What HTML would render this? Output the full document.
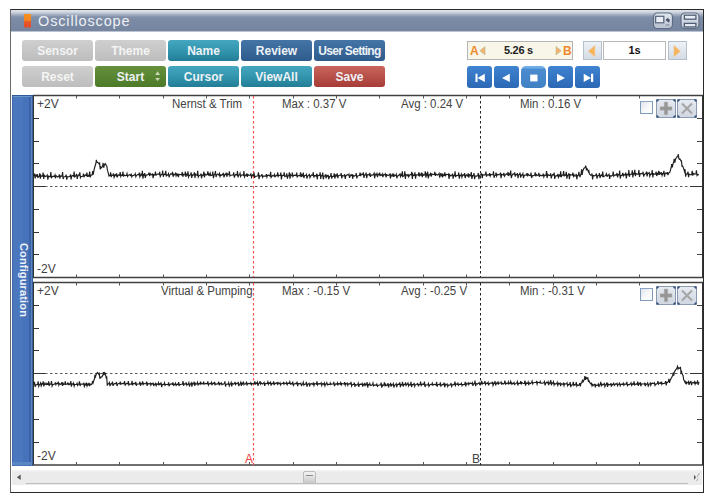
<!DOCTYPE html>
<html><head><meta charset="utf-8">
<style>
*{box-sizing:border-box;margin:0;padding:0}
html,body{width:713px;height:502px;overflow:hidden;background:#fff;font-family:"Liberation Sans",sans-serif}
.a{position:absolute}
#win{left:10px;top:9px;width:694px;height:484px;border:1px solid #2a2a2a;border-left-color:#6a6a6a;background:#fff}
#title{left:11px;top:10px;width:692px;height:22px;background:linear-gradient(#dfe4eb 0,#d2d8e2 2px,#a7b1c3 4.5px,#8090a9 7px,#7a89a4 50%,#7686a1 20px,#7686a1 21px,#bcc4d1 21px)}
#title .t{left:28px;top:3px;font-size:14px;letter-spacing:0.75px;color:#eef0f4}
#ticon{left:24px;top:14px;width:7px;height:14px;background:linear-gradient(#f6841f 0,#f28024 45%,#e5532b 55%,#e04e2b 100%)}
.ib{top:13px;width:20px;height:16px;border-radius:4px;border:1px solid #8e9bb1;background:linear-gradient(#dfe5ee,#b9c3d3)}
.btn{height:21px;width:71px;border-radius:3px;color:#eef2f6;font-weight:bold;font-size:12px;text-align:center;line-height:23px}
.gray{background:linear-gradient(#cfcfcf,#bdbdbd);color:#f4f4f4}
.teal{background:linear-gradient(#44a7bf,#3396ae 50%,#227d96)}
.blue{background:linear-gradient(#4475a6,#2e5b8c)}
.green{background:linear-gradient(#66913c,#4c7a28)}
.red{background:linear-gradient(#c9655d,#a73c36)}
#abox{left:467px;top:41px;width:106px;height:19px;border:1px solid #b4b4b4;background:#f8f5e9}
.sb{top:41px;width:19px;height:19px;border:1px solid #b6c0cc;background:linear-gradient(#eef2f6,#d3dbe5)}
#inp{left:603px;top:41px;width:63px;height:19px;border:1px solid #b8b8b8;background:#fff;font-weight:bold;font-size:11px;text-align:center;line-height:17px;color:#111}
.mb{top:65.5px;width:25px;height:22px;border-radius:3px;background:linear-gradient(#3f83d0,#2b68b6)}
.mb svg{position:absolute;left:0;top:0}
.stop{border-radius:5px;background:linear-gradient(#6eaee8 0,#6eaee8 2px,#4a8ccf 3px,#4081c4 100%)}
#side{left:12px;top:95px;width:21px;height:371px;background:linear-gradient(90deg,#3d67a8 0,#3d67a8 1px,#4b77be 1px,#4b77be 11px,#4572b8 11px,#4572b8 17px,#3a64a5 17px,#3a64a5 19px,#5a85c0 19px,#5a85c0 20px,#3a5f98 20px)}
#side:before{content:"";position:absolute;left:0;top:0;width:21px;height:1px;background:#2d5a96}
#side:after{content:"";position:absolute;left:1px;top:1px;width:18px;height:1px;background:#6a95c8}
#side .bt{left:0;top:367px;width:19px;height:3px;background:#5a86c4}
#side .cf{left:-14px;top:167px;width:52px;transform:rotate(90deg);color:#f0f4fa;font-weight:bold;font-size:11px;letter-spacing:0.15px;white-space:nowrap;line-height:14px}
.lbl{font-size:12px;color:#424242;white-space:nowrap;line-height:14px}
.sx{transform:scaleX(.955);transform-origin:0 0}
.cb{width:13px;height:13px;border:1px solid #7f9db9;border-top-color:#8aa4c8;background:linear-gradient(135deg,#dfe3ea,#fbfbfc 60%)}
.pb{width:20px;height:19px;border:1px solid #8c9ab0;border-radius:3px;background:linear-gradient(#e6eaf1,#d0d7e2)}
.pb svg{position:absolute;left:-1px;top:-1px}
#scroll{left:12px;top:470px;width:690px;height:15px;background:linear-gradient(#f2f2f2 0,#f2f2f2 1px,#ebebeb 2px)}
#scroll .trk{left:14px;top:12.5px;width:662px;height:1.5px;background:#bdbdbd}
#thumb{left:303px;top:471px;width:13px;height:13px;border:1px solid #bdbdbd;border-radius:2px;background:linear-gradient(#f4f4f4,#c9c9c9)}
</style></head><body>
<div class="a" id="win"></div>
<div class="a" id="title"></div>
<svg class="a" style="left:24px;top:14px" width="8" height="15"><path d="M0 0H7V13L6 14L5 13L4 14L3 13L2 14L1 13L0 14Z" fill="url(#og)"/><defs><linearGradient id="og" x1="0" y1="0" x2="0" y2="1"><stop offset="0" stop-color="#f7901c"/><stop offset=".45" stop-color="#f38422"/><stop offset=".55" stop-color="#e8582a"/><stop offset="1" stop-color="#e04b2a"/></linearGradient></defs></svg>
<div class="a" style="left:38px;top:13px;font-size:14.5px;letter-spacing:0.85px;color:#eef0f4">Oscilloscope</div>
<svg class="a" style="left:650px;top:10px" width="52" height="21">
<defs><linearGradient id="ig" x1="0" y1="0" x2="0" y2="1"><stop offset="0" stop-color="#e4e9f0"/><stop offset="1" stop-color="#b9c3d2"/></linearGradient></defs>
<rect x="3.5" y="3" width="19" height="15.5" rx="4" fill="url(#ig)" stroke="#5f6b80" stroke-width="1.2"/>
<rect x="5.6" y="6.3" width="8.2" height="6.5" fill="#e9eef6" stroke="#5d6b82" stroke-width="1.3"/>
<path d="M15.5 9.9 L18.3 7.5 V8.9 H19.5 V12.3 H18.3 V12.3 Z" fill="#44526a"/>
<rect x="15.5" y="14" width="4" height="2.2" fill="#9aa5b6"/>
<rect x="5.5" y="14.6" width="8.5" height="1" fill="#b5bfcd"/>
<rect x="31" y="3" width="18" height="15.5" rx="4" fill="url(#ig)" stroke="#5f6b80" stroke-width="1.2"/>
<rect x="34.4" y="5.2" width="11.5" height="4" fill="#e9eef6" stroke="#4f5d74" stroke-width="1.3"/>
<rect x="34.4" y="13.4" width="11.5" height="3.5" fill="#e9eef6" stroke="#4f5d74" stroke-width="1.3"/>
</svg>

<div class="a btn gray" style="left:22px;top:40px">Sensor</div>
<div class="a btn gray" style="left:95px;top:40px">Theme</div>
<div class="a btn teal" style="left:168px;top:40px">Name</div>
<div class="a btn blue" style="left:241px;top:40px">Review</div>
<div class="a btn blue" style="left:314px;top:40px;letter-spacing:-0.7px">User Setting</div>
<div class="a btn gray" style="left:22px;top:66px">Reset</div>
<div class="a btn green" style="left:95px;top:66px">Start<svg class="a" style="left:0;top:0" width="71" height="21"><path d="M62.6 5.3 L65 8.9 H60.2 Z M62.6 15.1 L65 12 H60.2 Z" fill="#c9d9ba"/></svg></div>
<div class="a btn teal" style="left:168px;top:66px">Cursor</div>
<div class="a btn teal" style="left:241px;top:66px">ViewAll</div>
<div class="a btn red" style="left:314px;top:66px">Save</div>

<div class="a" id="abox"></div>
<div class="a" style="left:504px;top:44px;font-size:11px;font-weight:bold;color:#222;letter-spacing:-0.3px">5.26 s</div>
<div class="a" style="left:470px;top:44px;font-size:12px;font-weight:bold;color:#f08a2c">A</div>
<div class="a" style="left:563px;top:44px;font-size:12px;font-weight:bold;color:#f08a2c">B</div>
<div class="a sb" style="left:583px"></div>
<div class="a" id="inp">1s</div>
<div class="a sb" style="left:668px"></div>
<svg class="a" style="left:0;top:0" width="713" height="70"><path d="M479.8 50.8 L485 46.5 V55 Z" fill="#f2b470" stroke="#b8b890" stroke-width="0.6"/><path d="M561.2 50.8 L556 46.5 V55 Z" fill="#f2b470" stroke="#b8b890" stroke-width="0.6"/>
<path d="M588.4 51.2 L594.8 45.6 V56.8 Z" fill="#f6b35c" stroke="#f0c890" stroke-width="0.6"/><path d="M680.3 51.2 L674 45.6 V56.8 Z" fill="#f6b35c" stroke="#f0c890" stroke-width="0.6"/></svg>

<div class="a mb" style="left:467px"><svg width="25" height="22"><path d="M8.5 7.8h2v8.2h-2z M10.5 11.9 L17.8 7.8 V16 Z" fill="#fff"/></svg></div>
<div class="a mb" style="left:494px"><svg width="25" height="22"><path d="M8 11.9 L15.8 7.8 V16 Z" fill="#fff"/></svg></div>
<div class="a mb stop" style="left:521px"><svg width="25" height="22"><path d="M9.2 8.6h7.3v6.8h-7.3z" fill="#fff"/></svg></div>
<div class="a mb" style="left:548px"><svg width="25" height="22"><path d="M9 7.8 L17 11.9 L9 16 Z" fill="#fff"/></svg></div>
<div class="a mb" style="left:575px"><svg width="25" height="22"><path d="M8.7 7.8 L16 11.9 L8.7 16 Z M16 7.8h2.2v8.2h-2.2z" fill="#fff"/></svg></div>

<div class="a" id="side"><div class="a bt"></div><div class="a cf">Configuration</div></div>

<svg width="713" height="502" style="position:absolute;left:0;top:0">
<line x1="33" y1="95.5" x2="703" y2="95.5" stroke="#404040" stroke-width="1.3"/>
<line x1="33" y1="277.5" x2="703" y2="277.5" stroke="#404040" stroke-width="1.3"/>
<line x1="33.5" y1="95.5" x2="33.5" y2="277.5" stroke="#333" stroke-width="1"/>
<line x1="702.5" y1="95.5" x2="702.5" y2="277.5" stroke="#333" stroke-width="1"/>
<line x1="76.5" y1="95.5" x2="76.5" y2="98.5" stroke="#555" stroke-width="1"/>
<line x1="76.5" y1="274.5" x2="76.5" y2="277.5" stroke="#555" stroke-width="1"/>
<line x1="119.5" y1="95.5" x2="119.5" y2="98.5" stroke="#555" stroke-width="1"/>
<line x1="119.5" y1="274.5" x2="119.5" y2="277.5" stroke="#555" stroke-width="1"/>
<line x1="163.5" y1="95.5" x2="163.5" y2="98.5" stroke="#555" stroke-width="1"/>
<line x1="163.5" y1="274.5" x2="163.5" y2="277.5" stroke="#555" stroke-width="1"/>
<line x1="206.5" y1="95.5" x2="206.5" y2="98.5" stroke="#555" stroke-width="1"/>
<line x1="206.5" y1="274.5" x2="206.5" y2="277.5" stroke="#555" stroke-width="1"/>
<line x1="249.5" y1="95.5" x2="249.5" y2="98.5" stroke="#555" stroke-width="1"/>
<line x1="249.5" y1="274.5" x2="249.5" y2="277.5" stroke="#555" stroke-width="1"/>
<line x1="293.5" y1="95.5" x2="293.5" y2="98.5" stroke="#555" stroke-width="1"/>
<line x1="293.5" y1="274.5" x2="293.5" y2="277.5" stroke="#555" stroke-width="1"/>
<line x1="336.5" y1="95.5" x2="336.5" y2="98.5" stroke="#555" stroke-width="1"/>
<line x1="336.5" y1="274.5" x2="336.5" y2="277.5" stroke="#555" stroke-width="1"/>
<line x1="379.5" y1="95.5" x2="379.5" y2="98.5" stroke="#555" stroke-width="1"/>
<line x1="379.5" y1="274.5" x2="379.5" y2="277.5" stroke="#555" stroke-width="1"/>
<line x1="423.5" y1="95.5" x2="423.5" y2="98.5" stroke="#555" stroke-width="1"/>
<line x1="423.5" y1="274.5" x2="423.5" y2="277.5" stroke="#555" stroke-width="1"/>
<line x1="466.5" y1="95.5" x2="466.5" y2="98.5" stroke="#555" stroke-width="1"/>
<line x1="466.5" y1="274.5" x2="466.5" y2="277.5" stroke="#555" stroke-width="1"/>
<line x1="509.5" y1="95.5" x2="509.5" y2="98.5" stroke="#555" stroke-width="1"/>
<line x1="509.5" y1="274.5" x2="509.5" y2="277.5" stroke="#555" stroke-width="1"/>
<line x1="553.5" y1="95.5" x2="553.5" y2="98.5" stroke="#555" stroke-width="1"/>
<line x1="553.5" y1="274.5" x2="553.5" y2="277.5" stroke="#555" stroke-width="1"/>
<line x1="596.5" y1="95.5" x2="596.5" y2="98.5" stroke="#555" stroke-width="1"/>
<line x1="596.5" y1="274.5" x2="596.5" y2="277.5" stroke="#555" stroke-width="1"/>
<line x1="639.5" y1="95.5" x2="639.5" y2="98.5" stroke="#555" stroke-width="1"/>
<line x1="639.5" y1="274.5" x2="639.5" y2="277.5" stroke="#555" stroke-width="1"/>
<line x1="33" y1="118.5" x2="39" y2="118.5" stroke="#333" stroke-width="1"/>
<line x1="697" y1="118.5" x2="702" y2="118.5" stroke="#444" stroke-width="1"/>
<line x1="33" y1="141.5" x2="39" y2="141.5" stroke="#333" stroke-width="1"/>
<line x1="697" y1="141.5" x2="702" y2="141.5" stroke="#444" stroke-width="1"/>
<line x1="33" y1="163.5" x2="39" y2="163.5" stroke="#333" stroke-width="1"/>
<line x1="697" y1="163.5" x2="702" y2="163.5" stroke="#444" stroke-width="1"/>
<line x1="33" y1="209.5" x2="39" y2="209.5" stroke="#333" stroke-width="1"/>
<line x1="697" y1="209.5" x2="702" y2="209.5" stroke="#444" stroke-width="1"/>
<line x1="33" y1="232.5" x2="39" y2="232.5" stroke="#333" stroke-width="1"/>
<line x1="697" y1="232.5" x2="702" y2="232.5" stroke="#444" stroke-width="1"/>
<line x1="33" y1="254.5" x2="39" y2="254.5" stroke="#333" stroke-width="1"/>
<line x1="697" y1="254.5" x2="702" y2="254.5" stroke="#444" stroke-width="1"/>
<line x1="33" y1="186.5" x2="45" y2="186.5" stroke="#333" stroke-width="1"/>
<line x1="45" y1="186.5" x2="690" y2="186.5" stroke="#5a5a5a" stroke-width="1" stroke-dasharray="2.5 2.5"/>
<line x1="690" y1="186.5" x2="702" y2="186.5" stroke="#333" stroke-width="1"/>
<line x1="33" y1="282.5" x2="703" y2="282.5" stroke="#404040" stroke-width="1.3"/>
<line x1="33" y1="465" x2="703" y2="465" stroke="#404040" stroke-width="1.3"/>
<line x1="33.5" y1="282.5" x2="33.5" y2="465" stroke="#333" stroke-width="1"/>
<line x1="702.5" y1="282.5" x2="702.5" y2="465" stroke="#333" stroke-width="1"/>
<line x1="76.5" y1="282.5" x2="76.5" y2="285.5" stroke="#555" stroke-width="1"/>
<line x1="76.5" y1="462" x2="76.5" y2="465" stroke="#555" stroke-width="1"/>
<line x1="119.5" y1="282.5" x2="119.5" y2="285.5" stroke="#555" stroke-width="1"/>
<line x1="119.5" y1="462" x2="119.5" y2="465" stroke="#555" stroke-width="1"/>
<line x1="163.5" y1="282.5" x2="163.5" y2="285.5" stroke="#555" stroke-width="1"/>
<line x1="163.5" y1="462" x2="163.5" y2="465" stroke="#555" stroke-width="1"/>
<line x1="206.5" y1="282.5" x2="206.5" y2="285.5" stroke="#555" stroke-width="1"/>
<line x1="206.5" y1="462" x2="206.5" y2="465" stroke="#555" stroke-width="1"/>
<line x1="249.5" y1="282.5" x2="249.5" y2="285.5" stroke="#555" stroke-width="1"/>
<line x1="249.5" y1="462" x2="249.5" y2="465" stroke="#555" stroke-width="1"/>
<line x1="293.5" y1="282.5" x2="293.5" y2="285.5" stroke="#555" stroke-width="1"/>
<line x1="293.5" y1="462" x2="293.5" y2="465" stroke="#555" stroke-width="1"/>
<line x1="336.5" y1="282.5" x2="336.5" y2="285.5" stroke="#555" stroke-width="1"/>
<line x1="336.5" y1="462" x2="336.5" y2="465" stroke="#555" stroke-width="1"/>
<line x1="379.5" y1="282.5" x2="379.5" y2="285.5" stroke="#555" stroke-width="1"/>
<line x1="379.5" y1="462" x2="379.5" y2="465" stroke="#555" stroke-width="1"/>
<line x1="423.5" y1="282.5" x2="423.5" y2="285.5" stroke="#555" stroke-width="1"/>
<line x1="423.5" y1="462" x2="423.5" y2="465" stroke="#555" stroke-width="1"/>
<line x1="466.5" y1="282.5" x2="466.5" y2="285.5" stroke="#555" stroke-width="1"/>
<line x1="466.5" y1="462" x2="466.5" y2="465" stroke="#555" stroke-width="1"/>
<line x1="509.5" y1="282.5" x2="509.5" y2="285.5" stroke="#555" stroke-width="1"/>
<line x1="509.5" y1="462" x2="509.5" y2="465" stroke="#555" stroke-width="1"/>
<line x1="553.5" y1="282.5" x2="553.5" y2="285.5" stroke="#555" stroke-width="1"/>
<line x1="553.5" y1="462" x2="553.5" y2="465" stroke="#555" stroke-width="1"/>
<line x1="596.5" y1="282.5" x2="596.5" y2="285.5" stroke="#555" stroke-width="1"/>
<line x1="596.5" y1="462" x2="596.5" y2="465" stroke="#555" stroke-width="1"/>
<line x1="639.5" y1="282.5" x2="639.5" y2="285.5" stroke="#555" stroke-width="1"/>
<line x1="639.5" y1="462" x2="639.5" y2="465" stroke="#555" stroke-width="1"/>
<line x1="33" y1="305.5" x2="39" y2="305.5" stroke="#333" stroke-width="1"/>
<line x1="697" y1="305.5" x2="702" y2="305.5" stroke="#444" stroke-width="1"/>
<line x1="33" y1="328.5" x2="39" y2="328.5" stroke="#333" stroke-width="1"/>
<line x1="697" y1="328.5" x2="702" y2="328.5" stroke="#444" stroke-width="1"/>
<line x1="33" y1="350.5" x2="39" y2="350.5" stroke="#333" stroke-width="1"/>
<line x1="697" y1="350.5" x2="702" y2="350.5" stroke="#444" stroke-width="1"/>
<line x1="33" y1="396.5" x2="39" y2="396.5" stroke="#333" stroke-width="1"/>
<line x1="697" y1="396.5" x2="702" y2="396.5" stroke="#444" stroke-width="1"/>
<line x1="33" y1="419.5" x2="39" y2="419.5" stroke="#333" stroke-width="1"/>
<line x1="697" y1="419.5" x2="702" y2="419.5" stroke="#444" stroke-width="1"/>
<line x1="33" y1="442.5" x2="39" y2="442.5" stroke="#333" stroke-width="1"/>
<line x1="697" y1="442.5" x2="702" y2="442.5" stroke="#444" stroke-width="1"/>
<line x1="33" y1="373.5" x2="45" y2="373.5" stroke="#333" stroke-width="1"/>
<line x1="45" y1="373.5" x2="690" y2="373.5" stroke="#5a5a5a" stroke-width="1" stroke-dasharray="2.5 2.5"/>
<line x1="690" y1="373.5" x2="702" y2="373.5" stroke="#333" stroke-width="1"/>
<line x1="253.5" y1="96" x2="253.5" y2="277" stroke="#ff5050" stroke-width="1.2" stroke-dasharray="2.5 2.5"/>
<line x1="253.5" y1="283" x2="253.5" y2="465" stroke="#ff5050" stroke-width="1.2" stroke-dasharray="2.5 2.5"/>
<line x1="480.5" y1="96" x2="480.5" y2="277" stroke="#222" stroke-width="1" stroke-dasharray="2.5 2.5"/>
<line x1="480.5" y1="283" x2="480.5" y2="465" stroke="#222" stroke-width="1" stroke-dasharray="2.5 2.5"/>
<polyline points="34.00,175.76 34.50,173.56 35.10,178.43 35.70,176.00 36.01,175.00 36.87,176.18 37.37,174.05 37.97,177.33 38.57,176.77 39.27,176.26 39.77,173.39 40.37,178.73 40.97,175.33 41.61,176.22 42.61,176.04 43.11,172.59 43.71,178.94 44.31,175.28 45.52,176.56 46.76,175.91 47.26,175.13 47.86,179.67 48.46,176.11 49.27,176.56 50.35,176.42 50.85,172.14 51.45,178.20 52.05,176.75 53.27,176.11 54.52,176.63 55.02,174.98 55.62,177.38 56.22,175.71 57.52,177.05 58.81,176.34 59.31,174.26 59.91,178.55 60.51,175.97 61.10,175.90 62.08,176.25 62.58,172.15 63.18,179.06 63.78,176.89 64.58,176.75 65.65,176.27 66.15,174.61 66.75,179.56 67.35,176.88 68.73,176.73 70.05,176.20 70.55,174.33 71.15,179.35 71.75,176.05 72.53,175.51 73.60,176.25 74.10,171.57 74.70,176.84 75.30,176.36 76.11,175.42 76.61,173.88 77.21,178.98 77.81,176.43 78.36,174.92 79.32,175.23 79.82,172.35 80.42,177.49 81.02,176.37 81.87,176.53 82.96,176.19 83.46,173.68 84.06,176.60 84.66,175.80 85.34,174.77 86.37,175.50 86.87,172.61 87.47,176.82 88.07,174.77 88.31,176.25 89.15,176.08 89.65,171.62 90.25,177.43 90.85,175.17 91.26,175.11 92.17,174.82 92.67,171.20 93.27,174.72 93.87,170.76 94.76,167.00 95.86,163.50 96.36,159.87 96.96,162.13 97.56,162.44 98.15,162.73 99.12,164.04 99.62,163.21 100.22,169.28 100.82,166.97 101.57,167.80 102.62,166.04 103.12,162.95 103.72,167.62 104.32,165.09 105.19,163.62 106.29,165.37 106.79,166.02 107.39,170.17 107.99,171.83 108.97,176.02 110.11,175.28 110.61,172.41 111.21,177.10 111.81,175.10 112.14,175.02 113.01,175.47 113.51,173.44 114.11,177.32 114.71,175.87 115.20,174.53 116.14,175.64 116.64,173.43 117.24,176.83 117.84,175.94 118.62,174.92 119.68,175.32 120.18,172.10 120.78,176.44 121.38,175.06 121.61,175.08 122.44,175.31 122.94,171.54 123.54,176.63 124.14,175.06 125.30,175.60 126.52,175.26 127.02,173.63 127.62,176.40 128.22,175.32 129.45,174.68 130.71,175.57 131.21,173.66 131.81,176.79 132.41,175.70 133.53,175.37 134.73,174.91 135.23,173.71 135.83,176.70 136.43,175.54 137.55,174.56 138.76,174.84 139.26,172.57 139.86,176.93 140.46,175.62 140.92,174.23 141.85,175.29 142.35,170.89 142.95,178.69 143.55,174.63 144.23,175.19 144.73,173.05 145.33,177.83 145.93,175.28 147.26,174.92 148.55,174.37 149.05,172.51 149.65,176.02 150.25,173.77 150.96,174.69 151.99,174.85 152.49,173.45 153.09,178.14 153.69,174.83 154.07,175.24 154.96,174.89 155.46,171.58 156.06,175.21 156.66,174.89 157.90,173.85 159.17,174.61 159.67,171.74 160.27,176.49 160.87,175.23 161.26,174.64 162.16,174.17 162.66,170.60 163.26,176.72 163.86,174.96 164.31,174.19 165.23,174.51 165.73,170.79 166.33,175.76 166.93,175.02 167.18,175.26 168.02,174.87 168.52,173.60 169.12,177.30 169.72,175.21 170.83,173.77 172.04,174.36 172.54,171.92 173.14,176.72 173.74,174.60 174.10,175.16 174.98,174.20 175.48,173.36 176.08,175.83 176.68,173.95 177.36,175.12 177.86,173.56 178.46,177.11 179.06,174.45 180.42,174.48 181.73,175.00 182.23,171.95 182.83,176.76 183.43,174.32 183.89,174.58 184.82,174.97 185.32,171.57 185.92,176.88 186.52,174.18 186.67,174.36 187.46,175.06 187.96,171.37 188.56,176.91 189.16,175.51 189.66,175.19 190.60,174.84 191.10,172.38 191.70,177.98 192.30,174.84 192.88,175.33 193.86,174.71 194.36,172.25 194.96,177.95 195.56,174.21 196.18,174.84 197.18,175.38 197.68,170.86 198.28,176.89 198.88,175.67 199.45,175.47 200.43,174.89 200.93,173.60 201.53,178.27 202.13,175.20 202.47,175.60 203.34,175.07 203.84,171.47 204.44,177.42 205.04,174.15 206.14,175.00 207.34,174.43 207.84,171.26 208.44,175.66 209.04,174.05 209.73,175.18 210.23,173.25 210.83,175.55 211.43,175.36 212.31,175.10 212.81,171.52 213.41,178.14 214.01,175.52 214.15,174.84 214.94,174.19 215.44,171.16 216.04,177.05 216.64,175.06 217.75,173.95 218.95,175.12 219.45,173.54 220.05,176.42 220.65,174.76 221.68,175.24 222.86,174.30 223.36,172.90 223.96,177.37 224.56,175.11 224.87,174.47 225.73,174.56 226.23,172.58 226.83,176.76 227.43,173.94 227.92,174.70 228.86,174.62 229.36,171.27 229.96,175.98 230.56,175.10 231.92,175.25 233.22,174.84 233.72,172.29 234.32,177.66 234.92,175.59 235.85,174.28 236.98,175.22 237.48,170.93 238.08,177.39 238.68,174.91 239.55,174.71 240.05,173.25 240.65,176.45 241.25,175.27 242.25,174.82 243.40,175.41 243.90,171.06 244.50,176.92 245.10,175.64 245.40,175.13 246.26,175.41 246.76,173.52 247.36,176.79 247.96,174.53 249.14,175.39 250.38,175.12 250.88,173.36 251.48,177.27 252.08,176.02 252.59,174.91 253.54,175.55 254.04,172.64 254.64,177.84 255.24,176.23 256.62,176.24 257.94,175.67 258.44,172.33 259.04,179.20 259.64,175.54 260.40,176.15 261.46,175.70 261.96,174.06 262.56,177.23 263.16,176.14 264.49,176.07 265.80,176.14 266.30,174.03 266.90,177.09 267.50,175.32 268.83,175.18 270.13,176.12 270.63,171.75 271.23,177.27 271.83,176.37 272.80,175.37 273.95,175.93 274.45,174.48 275.05,176.69 275.65,176.26 276.22,175.27 277.19,175.72 277.69,172.41 278.29,176.35 278.89,175.30 279.37,175.47 280.30,175.26 280.80,172.66 281.40,179.37 282.00,175.34 282.66,175.61 283.67,175.27 284.17,172.33 284.77,176.58 285.37,176.18 285.51,176.22 286.29,175.95 286.79,173.28 287.39,178.68 287.99,175.91 288.87,175.63 289.37,172.30 289.97,178.76 290.57,175.00 290.96,175.88 291.85,175.61 292.35,172.68 292.95,176.50 293.55,175.40 294.89,175.15 296.20,175.61 296.70,172.59 297.30,176.74 297.90,175.70 298.89,175.68 300.04,175.88 300.54,172.32 301.14,176.59 301.74,176.26 301.96,174.84 302.79,175.74 303.29,172.57 303.89,178.04 304.49,175.80 304.93,175.47 305.84,175.21 306.34,174.44 306.94,178.63 307.54,176.06 307.95,175.69 308.86,175.48 309.36,173.84 309.96,177.62 310.56,176.35 311.58,174.88 312.75,175.46 313.25,172.21 313.85,177.63 314.45,175.47 315.14,175.62 316.16,176.11 316.66,173.72 317.26,179.30 317.86,175.15 318.60,175.45 319.64,175.46 320.14,172.33 320.74,178.98 321.34,175.34 322.23,175.83 322.73,172.49 323.33,179.30 323.93,176.39 324.16,176.11 324.99,175.84 325.49,174.39 326.09,178.38 326.69,176.08 326.87,175.42 327.67,176.26 328.17,174.95 328.77,179.27 329.37,176.65 329.69,176.75 330.56,176.00 331.06,173.04 331.66,178.70 332.26,176.78 332.77,176.25 333.72,176.29 334.22,173.33 334.82,178.54 335.42,176.27 335.82,174.96 336.71,176.01 337.21,173.24 337.81,178.22 338.41,175.72 339.48,175.21 340.67,175.22 341.17,173.09 341.77,178.50 342.37,175.57 343.09,175.76 344.13,176.03 344.63,174.22 345.23,178.85 345.83,175.76 347.16,174.68 348.46,175.16 348.96,174.26 349.56,177.87 350.16,176.15 350.64,175.04 351.58,175.54 352.08,173.95 352.68,178.79 353.28,175.45 354.49,176.00 355.73,175.45 356.23,173.10 356.83,178.49 357.43,175.92 358.42,175.77 359.57,175.37 360.07,172.52 360.67,176.14 361.27,174.23 361.86,174.29 362.84,174.66 363.34,172.42 363.94,178.00 364.54,175.08 364.80,174.87 365.63,174.79 366.13,172.51 366.73,178.17 367.33,174.81 368.23,174.41 369.34,175.23 369.84,172.84 370.44,176.91 371.04,175.05 372.29,175.18 373.55,174.48 374.05,173.41 374.65,178.29 375.25,174.39 375.54,174.97 376.39,174.74 376.89,173.57 377.49,177.10 378.09,174.48 378.33,174.23 379.17,174.74 379.67,172.53 380.27,176.03 380.87,174.27 380.99,175.04 381.77,175.36 382.27,174.08 382.87,177.19 383.47,174.99 384.02,174.33 384.98,174.90 385.48,173.99 386.08,177.48 386.68,174.63 388.03,175.48 389.33,174.87 389.83,174.21 390.43,178.37 391.03,174.89 391.49,175.82 392.42,175.78 392.92,173.39 393.52,176.85 394.12,174.90 394.75,175.89 395.75,175.16 396.25,174.11 396.85,178.26 397.45,176.18 398.31,175.50 399.41,174.82 399.91,174.11 400.51,176.59 401.11,174.48 401.80,175.48 402.30,171.32 402.90,176.67 403.50,176.14 404.29,175.60 404.79,171.23 405.39,179.02 405.99,174.41 406.64,174.88 407.64,175.70 408.14,174.00 408.74,176.86 409.34,175.81 410.18,174.46 411.26,174.95 411.76,171.89 412.36,178.83 412.96,174.50 413.48,175.51 414.44,175.41 414.94,172.24 415.54,178.73 416.14,174.76 417.15,174.82 418.31,175.25 418.81,172.39 419.41,176.51 420.01,174.31 420.31,175.30 421.16,175.11 421.66,172.65 422.26,177.16 422.86,174.22 423.69,175.21 424.78,174.78 425.28,171.31 425.88,177.71 426.48,174.06 427.20,175.15 427.70,171.68 428.30,178.34 428.90,175.44 429.21,174.68 430.07,175.01 430.57,172.72 431.17,176.68 431.77,173.99 433.01,174.58 434.28,174.35 434.78,171.93 435.38,175.86 435.98,174.04 437.31,175.08 438.61,174.35 439.11,173.43 439.71,177.67 440.31,175.03 440.62,174.00 441.48,175.41 441.98,173.27 442.58,177.48 443.18,174.81 443.47,175.47 444.33,175.30 444.83,172.28 445.43,176.36 446.03,174.47 446.86,174.32 447.94,174.70 448.44,174.15 449.04,179.01 449.64,174.64 450.78,175.92 452.00,175.20 452.50,173.58 453.10,178.66 453.70,175.48 454.56,175.57 455.06,171.42 455.66,177.15 456.26,175.51 457.14,175.24 458.25,175.72 458.75,172.43 459.35,178.73 459.95,174.85 460.07,175.45 460.85,175.64 461.35,174.23 461.95,177.24 462.55,175.38 463.18,174.64 464.18,175.67 464.68,173.08 465.28,178.24 465.88,175.62 466.64,174.91 467.69,175.96 468.19,173.38 468.79,177.53 469.39,174.67 469.86,174.90 470.78,175.87 471.28,172.01 471.88,178.94 472.48,176.26 472.69,175.58 473.50,175.40 474.00,173.02 474.60,179.14 475.20,176.06 476.50,176.11 477.78,175.57 478.28,172.97 478.88,179.20 479.48,175.99 480.14,174.84 481.15,174.84 481.65,173.94 482.25,178.21 482.85,174.76 484.15,175.13 485.43,174.56 485.93,171.59 486.53,176.63 487.13,174.88 488.01,174.69 489.12,175.20 489.62,173.04 490.22,175.96 490.82,174.52 491.84,174.70 493.01,174.45 493.51,171.30 494.11,177.79 494.71,175.64 495.55,175.17 496.05,172.58 496.65,175.98 497.25,174.39 498.62,174.64 499.93,174.73 500.43,172.55 501.03,178.16 501.63,174.29 502.35,174.61 503.38,175.01 503.88,172.76 504.48,176.18 505.08,175.23 506.31,173.80 507.57,174.73 508.07,171.97 508.67,175.97 509.27,173.91 509.43,174.19 510.22,174.69 510.72,170.49 511.32,178.01 511.92,175.62 512.99,173.94 514.17,174.27 514.67,172.43 515.27,176.64 515.87,174.03 516.10,174.92 516.93,174.65 517.43,173.12 518.03,178.20 518.63,174.75 519.50,174.42 520.00,172.55 520.60,177.69 521.20,175.26 521.54,175.70 522.41,174.70 522.91,173.62 523.51,178.17 524.11,175.53 525.23,175.04 526.44,175.10 526.94,173.20 527.54,176.33 528.14,174.20 529.29,175.34 530.52,175.53 531.02,172.59 531.62,177.97 532.22,175.87 533.46,175.66 534.72,175.00 535.22,172.42 535.82,176.36 536.42,174.51 537.25,175.41 538.33,175.11 538.83,172.76 539.43,176.90 540.03,174.95 541.42,175.63 542.74,175.62 543.24,173.71 543.84,176.89 544.44,175.21 545.05,175.02 546.04,175.56 546.54,171.13 547.14,177.93 547.74,174.39 548.92,175.39 550.16,175.26 550.66,173.43 551.26,178.31 551.86,176.04 552.61,174.59 553.66,175.18 554.16,172.67 554.76,178.96 555.36,176.17 556.28,175.61 557.40,175.82 557.90,173.85 558.50,177.34 559.10,175.97 559.35,175.06 560.18,175.88 560.68,171.26 561.28,177.12 561.88,175.17 562.23,174.97 563.11,175.08 563.61,171.09 564.21,176.31 564.81,174.84 564.97,174.78 565.76,175.35 566.26,171.87 566.86,178.74 567.46,175.54 568.30,174.77 568.80,173.43 569.40,179.13 570.00,174.52 571.14,174.88 572.35,175.05 572.85,172.54 573.45,176.18 574.05,174.84 574.71,176.15 575.72,175.77 576.22,173.83 576.82,179.29 577.42,175.68 577.59,175.63 578.39,174.90 578.89,171.89 579.49,176.69 580.09,174.85 580.26,176.00 581.06,174.04 581.56,169.37 582.16,174.84 582.76,171.01 583.98,168.15 585.23,167.38 585.73,165.70 586.33,169.55 586.93,168.61 587.45,169.32 588.40,171.78 588.90,170.88 589.50,174.23 590.10,174.53 590.57,175.29 591.50,175.29 592.00,173.45 592.60,179.37 593.20,175.54 594.57,175.92 595.88,175.03 596.38,173.47 596.98,178.69 597.58,176.04 597.99,175.66 598.90,175.56 599.40,173.11 600.00,177.96 600.60,176.10 601.23,174.95 602.23,175.94 602.73,171.66 603.33,176.75 603.93,176.27 604.74,176.03 605.82,175.14 606.32,173.79 606.92,176.26 607.52,176.21 607.72,175.18 608.54,174.90 609.04,174.35 609.64,178.81 610.24,175.78 611.45,176.09 612.70,175.19 613.20,171.62 613.80,176.13 614.40,175.16 615.35,174.94 616.48,175.10 616.98,172.96 617.58,177.30 618.18,174.68 618.35,174.57 619.16,174.97 619.66,170.58 620.26,178.55 620.86,175.42 621.34,175.35 622.27,175.21 622.77,172.85 623.37,175.76 623.97,174.61 624.34,175.01 625.23,174.70 625.73,172.65 626.33,178.34 626.93,174.37 627.39,174.40 628.31,174.80 628.81,170.09 629.41,176.77 630.01,174.21 630.73,174.49 631.77,174.15 632.27,170.42 632.87,177.43 633.47,173.37 634.30,174.01 634.80,169.86 635.40,176.00 636.00,173.56 637.18,174.13 638.42,173.93 638.92,170.13 639.52,177.00 640.12,173.71 641.35,173.57 642.60,173.78 643.10,171.71 643.70,176.70 644.30,174.53 644.99,173.99 646.01,173.52 646.51,171.65 647.11,176.52 647.71,173.15 647.89,173.04 648.69,173.55 649.19,172.78 649.79,176.25 650.39,174.53 650.81,173.84 651.72,174.12 652.22,170.00 652.82,177.44 653.42,173.66 654.44,174.09 655.61,174.18 656.11,171.57 656.71,176.03 657.31,174.47 657.45,173.39 658.24,174.12 658.74,170.83 659.34,174.77 659.94,172.93 660.17,173.51 661.00,174.14 661.50,172.26 662.10,175.39 662.70,173.59 663.40,173.71 663.90,170.74 664.50,176.65 665.10,173.67 665.79,173.06 666.82,173.66 667.32,172.07 667.92,175.16 668.52,173.22 669.89,172.27 671.20,167.50 671.70,164.21 672.30,167.31 672.90,164.40 673.71,161.95 674.21,158.89 674.81,162.73 675.41,159.72 676.56,157.14 677.78,156.63 678.28,154.15 678.88,158.65 679.48,159.23 680.01,159.02 680.96,160.91 681.46,160.91 682.06,166.34 682.66,166.25 683.44,167.84 684.51,171.43 685.01,169.23 685.61,176.59 686.21,173.87 686.58,174.04 687.47,173.98 687.97,171.64 688.57,177.07 689.17,174.06 690.42,174.77 691.69,174.63 692.19,170.81 692.79,175.59 693.39,173.40 694.65,174.03 695.92,173.79 696.42,170.22 697.02,175.50 697.62,174.65 698.03,174.84 698.94,174.48" fill="none" stroke="#1e1e1e" stroke-width="1.15"/>
<polyline points="34.00,384.52 34.50,381.83 35.10,386.95 35.70,384.63 36.56,384.85 37.65,384.28 38.15,381.43 38.75,386.25 39.35,384.78 40.09,384.24 40.59,383.04 41.19,385.97 41.79,384.32 41.92,383.62 42.70,384.05 43.20,381.40 43.80,386.41 44.40,383.75 44.68,384.54 45.52,384.24 46.02,383.21 46.62,384.63 47.22,384.57 47.39,383.74 48.19,384.45 48.69,381.38 49.29,385.21 49.89,384.62 50.16,384.09 51.01,383.80 51.51,381.15 52.11,386.05 52.71,384.57 53.64,384.46 54.77,383.84 55.27,382.92 55.87,384.75 56.47,383.37 56.86,383.66 57.76,383.53 58.26,381.66 58.86,385.15 59.46,383.64 60.29,384.27 61.37,383.73 61.87,382.10 62.47,385.95 63.07,383.31 63.72,384.46 64.73,384.06 65.23,381.25 65.83,384.42 66.43,384.25 67.16,383.95 67.66,383.25 68.26,384.51 68.86,383.52 69.34,384.50 70.28,384.14 70.78,381.12 71.38,386.59 71.98,383.79 72.23,383.81 73.06,384.22 73.56,383.14 74.16,386.22 74.76,384.43 75.48,384.53 76.51,384.45 77.01,383.29 77.61,385.42 78.21,384.31 78.97,384.08 79.47,381.40 80.07,385.97 80.67,384.03 81.95,384.08 83.22,384.04 83.72,383.40 84.32,386.45 84.92,385.05 85.14,384.01 85.96,384.83 86.46,382.59 87.06,385.92 87.66,384.20 88.44,384.80 88.94,382.87 89.54,386.05 90.14,384.01 90.96,384.78 92.03,383.86 92.53,380.99 93.13,382.89 93.73,380.87 94.48,378.79 94.98,374.93 95.58,376.64 96.18,374.30 97.50,372.51 98.80,374.44 99.30,373.52 99.90,378.73 100.50,377.18 101.67,377.14 102.90,375.00 103.40,372.03 104.00,375.22 104.60,372.63 105.22,373.27 106.21,377.86 106.71,377.27 107.31,385.66 107.91,384.05 108.08,383.89 108.89,383.58 109.39,382.61 109.99,386.14 110.59,384.34 111.04,383.70 111.96,384.07 112.46,381.58 113.06,385.85 113.66,384.17 114.74,383.66 115.94,383.65 116.44,382.03 117.04,386.03 117.64,384.03 118.61,383.52 119.76,383.87 120.26,381.75 120.86,384.27 121.46,383.80 122.77,383.41 124.07,383.68 124.57,381.13 125.17,385.65 125.77,384.06 126.69,383.49 127.82,383.85 128.32,381.08 128.92,384.95 129.52,384.09 130.40,384.12 131.51,384.02 132.01,380.77 132.61,385.33 133.21,383.70 134.16,383.25 135.29,384.01 135.79,381.93 136.39,385.75 136.99,383.97 138.16,384.00 139.38,383.95 139.88,381.74 140.48,385.75 141.08,383.67 141.29,383.93 142.11,383.89 142.61,381.47 143.21,384.38 143.81,383.41 144.88,383.79 146.07,383.68 146.57,381.65 147.17,385.84 147.77,383.37 148.67,383.93 149.78,383.67 150.28,383.08 150.88,385.25 151.48,383.66 151.77,383.68 152.62,384.06 153.12,382.58 153.72,386.00 154.32,384.25 155.07,384.46 155.57,383.55 156.17,385.60 156.77,383.93 157.08,384.10 157.94,384.49 158.44,382.74 159.04,384.85 159.64,384.42 159.77,383.78 160.55,384.18 161.05,382.30 161.65,386.98 162.25,384.73 163.00,384.24 164.04,384.46 164.54,382.86 165.14,385.19 165.74,384.50 166.87,384.46 168.08,384.74 168.58,382.32 169.18,385.68 169.78,384.88 171.12,383.76 172.42,384.42 172.92,382.28 173.52,385.17 174.12,384.51 174.24,384.84 175.02,384.28 175.52,383.16 176.12,385.47 176.72,384.89 177.22,384.14 178.16,384.58 178.66,382.22 179.26,385.33 179.86,384.83 181.20,384.19 182.50,384.02 183.00,381.17 183.60,385.72 184.20,383.83 184.76,384.05 185.73,384.14 186.23,382.35 186.83,385.17 187.43,384.34 187.57,384.39 188.36,383.98 188.86,382.66 189.46,386.52 190.06,384.25 190.77,383.70 191.27,382.87 191.87,386.56 192.47,383.56 192.78,383.95 193.65,383.89 194.15,381.71 194.75,385.92 195.35,383.26 195.99,384.04 197.00,383.72 197.50,382.26 198.10,384.83 198.70,383.69 199.09,383.60 199.99,383.81 200.49,381.59 201.09,384.19 201.69,383.29 202.17,383.53 203.11,383.87 203.61,381.65 204.21,384.10 204.81,383.91 206.08,383.46 207.36,383.71 207.86,381.42 208.46,385.13 209.06,384.07 209.84,383.41 210.91,383.82 211.41,382.47 212.01,384.74 212.61,383.99 213.14,383.04 214.09,383.74 214.59,381.94 215.19,384.75 215.79,383.96 216.95,384.14 218.18,383.63 218.68,381.73 219.28,385.29 219.88,383.47 220.05,383.25 220.85,383.93 221.35,382.92 221.95,384.74 222.55,384.13 223.35,384.11 224.42,383.41 224.92,381.43 225.52,386.48 226.12,384.42 227.04,384.06 228.16,384.08 228.66,382.69 229.26,385.79 229.86,384.41 230.64,383.58 231.14,382.54 231.74,386.43 232.34,383.43 233.32,384.02 234.47,383.63 234.97,381.78 235.57,384.48 236.17,383.40 236.73,383.73 237.69,383.55 238.19,381.89 238.79,386.05 239.39,384.35 240.22,383.82 240.72,382.49 241.32,385.71 241.92,383.83 242.08,384.39 242.87,383.50 243.37,381.55 243.97,384.66 244.57,383.97 245.07,383.80 246.02,383.82 246.52,381.67 247.12,384.85 247.72,383.80 248.98,383.40 250.25,383.69 250.75,382.72 251.35,384.67 251.95,383.47 252.99,383.90 254.17,383.73 254.67,381.37 255.27,384.23 255.87,383.73 256.09,383.00 256.91,383.56 257.41,382.28 258.01,385.93 258.61,383.42 258.76,383.22 259.55,383.06 260.05,381.06 260.65,384.01 261.25,382.94 262.35,383.91 263.55,383.11 264.05,382.41 264.65,385.99 265.25,383.50 266.19,383.68 267.32,383.35 267.82,381.79 268.42,384.28 269.02,383.04 269.19,383.38 269.99,383.15 270.49,382.29 271.09,385.60 271.69,383.42 272.15,383.61 273.08,383.50 273.58,381.38 274.18,385.07 274.78,383.34 275.36,383.55 276.34,382.96 276.84,382.57 277.44,384.23 278.04,382.71 278.57,383.78 279.53,383.51 280.03,382.70 280.63,384.90 281.23,383.84 281.88,383.52 282.89,383.37 283.39,382.55 283.99,384.28 284.59,383.02 285.17,383.31 286.14,383.78 286.64,382.53 287.24,384.61 287.84,383.28 288.36,383.15 289.31,383.41 289.81,381.86 290.41,384.22 291.01,384.20 291.39,383.52 292.28,383.86 292.78,381.51 293.38,385.32 293.98,384.34 295.28,383.35 296.57,383.72 297.07,381.66 297.67,386.05 298.27,383.51 299.19,383.59 300.31,383.79 300.81,383.20 301.41,385.43 302.01,384.63 302.74,383.92 303.24,382.34 303.84,385.22 304.44,384.39 304.93,384.38 305.87,383.93 306.37,381.91 306.97,386.76 307.57,384.34 307.77,384.07 308.58,383.80 309.08,383.40 309.68,386.43 310.28,384.07 311.64,383.62 312.95,384.56 313.45,382.34 314.05,385.49 314.65,383.69 315.40,383.66 316.45,384.18 316.95,381.34 317.55,384.81 318.15,383.86 319.40,383.61 320.66,383.83 321.16,382.92 321.76,385.56 322.36,383.90 322.90,383.57 323.85,384.48 324.35,383.07 324.95,385.75 325.55,383.98 326.31,383.78 326.81,382.72 327.41,384.82 328.01,384.13 328.73,384.59 329.77,384.32 330.27,382.92 330.87,384.58 331.47,384.09 332.29,384.02 333.37,383.93 333.87,381.92 334.47,386.16 335.07,384.54 335.86,383.78 336.92,384.27 337.42,382.86 338.02,384.78 338.62,383.79 339.23,383.51 340.22,384.28 340.72,382.67 341.32,384.84 341.92,383.53 342.98,383.75 344.17,384.04 344.67,382.11 345.27,385.17 345.87,383.58 346.72,383.81 347.22,383.06 347.82,385.32 348.42,384.03 349.39,383.71 350.53,384.11 351.03,381.85 351.63,386.04 352.23,384.80 352.80,384.52 353.77,384.42 354.27,382.70 354.87,386.74 355.47,384.62 356.52,385.03 357.70,384.66 358.20,383.26 358.80,386.87 359.40,384.42 360.41,384.15 361.57,384.40 362.07,383.42 362.67,386.71 363.27,384.45 364.08,384.94 364.58,382.81 365.18,385.34 365.78,384.24 366.59,384.72 367.09,382.17 367.69,387.49 368.29,385.01 368.44,384.54 369.24,384.80 369.74,383.50 370.34,385.45 370.94,385.05 371.51,385.36 372.49,384.67 372.99,383.10 373.59,385.87 374.19,385.26 375.19,384.94 376.35,385.24 376.85,384.12 377.45,386.24 378.05,385.55 379.36,384.98 380.65,384.98 381.15,382.58 381.75,387.63 382.35,385.06 382.93,385.60 383.91,384.70 384.41,382.43 385.01,386.43 385.61,384.41 386.43,385.56 387.51,385.00 388.01,383.16 388.61,387.40 389.21,384.77 389.96,384.72 390.46,383.77 391.06,386.62 391.66,384.66 391.93,385.15 392.78,384.70 393.28,383.59 393.88,387.50 394.48,385.19 394.79,385.20 395.65,384.66 396.15,383.76 396.75,387.08 397.35,384.68 398.20,384.09 399.29,384.34 399.79,382.30 400.39,387.14 400.99,384.22 401.20,384.96 402.02,384.71 402.52,381.89 403.12,386.45 403.72,384.91 404.14,384.37 405.06,384.52 405.56,382.48 406.16,385.40 406.76,384.34 407.46,384.11 407.96,383.10 408.56,385.82 409.16,384.42 409.58,384.70 410.48,384.80 410.98,381.87 411.58,387.01 412.18,384.67 412.72,384.64 413.68,384.65 414.18,382.94 414.78,386.26 415.38,384.65 416.11,384.46 417.15,384.12 417.65,383.61 418.25,385.75 418.85,384.55 419.23,384.78 420.11,384.32 420.61,381.64 421.21,385.60 421.81,384.76 422.80,383.97 423.95,384.65 424.45,381.64 425.05,387.06 425.65,384.79 426.69,385.00 427.87,384.68 428.37,383.49 428.97,386.28 429.57,385.12 430.59,384.32 431.75,384.70 432.25,383.12 432.85,385.19 433.45,384.56 434.81,384.32 436.12,385.04 436.62,381.96 437.22,386.63 437.82,384.61 438.72,384.27 439.84,384.81 440.34,382.45 440.94,386.12 441.54,385.26 442.48,384.42 443.62,384.60 444.12,382.67 444.72,387.29 445.32,384.35 445.72,384.93 446.62,384.55 447.12,383.97 447.72,386.51 448.32,385.15 449.38,385.19 450.57,384.62 451.07,383.03 451.67,386.33 452.27,385.12 453.27,384.32 454.43,384.60 454.93,381.57 455.53,385.39 456.13,383.85 456.50,383.94 457.39,384.45 457.89,383.29 458.49,385.25 459.09,384.40 459.85,384.43 460.91,384.36 461.41,383.39 462.01,385.72 462.61,384.52 463.56,384.62 464.70,384.25 465.20,381.80 465.80,386.51 466.40,383.56 466.82,384.12 467.73,383.81 468.23,382.94 468.83,384.71 469.43,383.31 470.60,383.18 471.83,383.72 472.33,382.74 472.93,385.79 473.53,383.85 473.71,383.95 474.52,383.68 475.02,380.68 475.62,386.13 476.22,383.61 477.33,384.00 478.54,383.09 479.04,382.59 479.64,384.32 480.24,383.18 481.13,383.46 481.63,380.92 482.23,383.99 482.83,383.17 483.45,383.33 484.44,382.98 484.94,381.22 485.54,384.60 486.14,383.48 486.64,383.24 487.59,383.57 488.09,382.44 488.69,385.45 489.29,383.51 490.63,382.98 491.93,383.22 492.43,381.78 493.03,385.40 493.63,383.77 493.76,383.10 494.55,383.25 495.05,380.98 495.65,385.54 496.25,383.36 496.63,383.02 497.52,383.54 498.02,381.43 498.62,383.91 499.22,383.20 499.67,382.98 500.59,382.99 501.09,382.05 501.69,384.04 502.29,383.30 503.21,383.94 504.33,383.26 504.83,380.50 505.43,384.05 506.03,383.17 506.77,383.74 507.81,383.55 508.31,381.87 508.91,383.89 509.51,383.04 510.20,383.26 510.70,381.50 511.30,383.97 511.90,382.99 512.52,383.93 513.52,383.31 514.02,382.50 514.62,384.45 515.22,383.88 515.82,383.54 516.80,382.95 517.30,381.72 517.90,385.52 518.50,383.18 519.19,383.36 520.22,383.33 520.72,381.07 521.32,383.77 521.92,382.58 523.17,383.48 524.44,383.38 524.94,380.50 525.54,385.63 526.14,382.90 526.69,383.66 527.66,383.29 528.16,382.00 528.76,385.22 529.36,382.84 530.41,383.49 531.58,382.65 532.08,381.22 532.68,383.93 533.28,382.76 534.67,382.48 535.99,382.42 536.49,381.66 537.09,384.20 537.69,382.12 538.61,382.47 539.73,382.88 540.23,381.50 540.83,383.15 541.43,383.05 542.68,383.27 543.94,382.48 544.44,381.59 545.04,385.37 545.64,383.38 546.46,382.29 547.54,382.88 548.04,381.71 548.64,385.20 549.24,382.88 549.47,383.39 550.30,383.11 550.80,380.19 551.40,385.25 552.00,382.70 552.18,382.74 552.99,383.18 553.49,381.81 554.09,384.93 554.69,383.50 555.58,384.05 556.68,383.60 557.18,382.34 557.78,385.37 558.38,383.98 558.69,383.26 559.56,383.94 560.06,383.18 560.66,386.10 561.26,383.80 561.91,383.94 562.92,384.22 563.42,383.27 564.02,385.70 564.62,383.53 565.45,384.02 566.54,383.87 567.04,382.93 567.64,385.81 568.24,384.53 568.70,384.90 569.63,384.45 570.13,382.14 570.73,387.11 571.33,385.10 571.82,385.17 572.76,384.37 573.26,381.81 573.86,385.36 574.46,384.66 574.86,385.04 575.76,384.71 576.26,382.00 576.86,386.03 577.46,384.95 578.18,385.33 579.22,384.86 579.72,383.20 580.32,386.37 580.92,383.44 581.08,383.53 581.88,382.23 582.38,380.44 582.98,381.91 583.58,380.88 584.38,379.07 584.88,376.09 585.48,379.94 586.08,376.90 586.42,378.07 587.30,378.74 587.80,377.37 588.40,381.34 589.00,380.79 589.86,382.70 590.95,383.99 591.45,383.31 592.05,385.88 592.65,384.50 593.25,385.34 594.23,384.64 594.73,384.27 595.33,387.33 595.93,384.95 596.70,385.39 597.75,384.96 598.25,383.97 598.85,386.97 599.45,384.97 600.22,384.59 600.72,381.90 601.32,385.51 601.92,384.19 602.76,384.93 603.84,384.33 604.34,382.92 604.94,386.58 605.54,385.08 606.41,384.24 606.91,382.39 607.51,386.92 608.11,384.02 609.11,384.78 610.26,384.27 610.76,383.78 611.36,386.59 611.96,384.39 612.30,384.86 613.17,384.07 613.67,383.18 614.27,385.39 614.87,384.85 615.50,383.90 616.50,384.14 617.00,383.42 617.60,385.68 618.20,384.37 619.06,383.95 619.56,383.24 620.16,385.79 620.76,384.41 621.66,384.10 622.77,384.46 623.27,383.18 623.87,385.25 624.47,384.13 625.25,384.18 626.32,384.17 626.82,381.93 627.42,385.58 628.02,384.49 629.27,384.55 630.53,383.84 631.03,382.90 631.63,385.44 632.23,384.63 632.62,383.85 633.51,384.25 634.01,381.25 634.61,384.92 635.21,384.49 636.08,383.96 637.18,384.27 637.68,381.54 638.28,385.98 638.88,383.61 639.77,384.09 640.27,382.03 640.87,386.29 641.47,383.85 642.82,384.00 644.13,383.78 644.63,383.29 645.23,386.17 645.83,383.92 646.27,384.48 647.18,383.85 647.68,382.92 648.28,386.58 648.88,384.30 649.69,383.91 650.19,383.01 650.79,385.30 651.39,383.49 652.64,383.19 653.90,383.56 654.40,382.81 655.00,385.31 655.60,384.17 656.37,384.15 657.43,383.23 657.93,381.05 658.53,384.22 659.13,383.47 659.76,382.86 660.76,383.35 661.26,381.62 661.86,384.36 662.46,383.27 663.84,383.70 665.16,382.79 665.66,381.12 666.26,385.38 666.86,382.35 667.43,382.36 668.41,381.55 668.91,378.86 669.51,382.79 670.11,380.33 671.39,377.95 672.66,375.52 673.16,372.71 673.76,375.55 674.36,371.97 675.67,369.87 676.96,368.07 677.46,366.42 678.06,369.00 678.66,367.75 679.03,367.92 679.92,368.43 680.42,366.86 681.02,372.79 681.62,371.82 681.78,373.37 682.57,374.71 683.07,375.54 683.67,379.82 684.27,380.40 684.43,381.21 685.22,382.75 685.72,381.73 686.32,384.41 686.92,382.29 687.12,382.42 687.94,382.77 688.44,381.69 689.04,384.82 689.64,382.40 690.42,382.72 690.92,380.83 691.52,385.09 692.12,383.16 692.94,382.37 694.01,382.95 694.51,381.73 695.11,384.13 695.71,382.59 696.15,383.30 697.07,382.84 697.57,380.32 698.17,384.89 698.77,382.15 698.92,383.33" fill="none" stroke="#1e1e1e" stroke-width="1.15"/>
</svg>

<div class="a lbl" style="left:37px;top:97px">+2V</div>
<div class="a lbl" style="left:37px;top:262px">-2V</div>
<div class="a lbl sx" style="left:172px;top:97px">Nernst &amp; Trim</div>
<div class="a lbl sx" style="left:282px;top:97px">Max : 0.37 V</div>
<div class="a lbl sx" style="left:401px;top:97px">Avg : 0.24 V</div>
<div class="a lbl sx" style="left:520px;top:97px">Min : 0.16 V</div>
<div class="a lbl" style="left:37px;top:284px">+2V</div>
<div class="a lbl" style="left:37px;top:449px">-2V</div>
<div class="a lbl sx" style="left:161px;top:284px">Virtual &amp; Pumping</div>
<div class="a lbl sx" style="left:282px;top:284px">Max : -0.15 V</div>
<div class="a lbl sx" style="left:401px;top:284px">Avg : -0.25 V</div>
<div class="a lbl sx" style="left:520px;top:284px">Min : -0.31 V</div>
<div class="a lbl" style="left:245px;top:452px;color:#f04040">A</div>
<div class="a lbl" style="left:472px;top:452px">B</div>

<div class="a cb" style="left:640px;top:101px"></div>
<div class="a pb" style="left:656px;top:99px"><svg width="20" height="19"><path d="M1 2.8V1H2.8 M17.2 1H19V2.8 M19 16.2V18H17.2 M2.8 18H1V16.2" fill="none" stroke="#34507e" stroke-width="1.5"/><path d="M8.2 3h3.6v4.7h4.2v3.6h-4.2v4.4h-3.6v-4.4h-4.2v-3.6h4.2z" fill="#969696" stroke="#b8b8b8" stroke-width="0.5"/></svg></div>
<div class="a pb" style="left:677px;top:99px"><svg width="20" height="19"><path d="M1 2.8V1H2.8 M17.2 1H19V2.8 M19 16.2V18H17.2 M2.8 18H1V16.2" fill="none" stroke="#34507e" stroke-width="1.5"/><path d="M5 4.5 L15 14.5 M15 4.5 L5 14.5" stroke="#a4a4a4" stroke-width="2"/></svg></div>
<div class="a cb" style="left:640px;top:288px"></div>
<div class="a pb" style="left:656px;top:286px"><svg width="20" height="19"><path d="M1 2.8V1H2.8 M17.2 1H19V2.8 M19 16.2V18H17.2 M2.8 18H1V16.2" fill="none" stroke="#34507e" stroke-width="1.5"/><path d="M8.2 3h3.6v4.7h4.2v3.6h-4.2v4.4h-3.6v-4.4h-4.2v-3.6h4.2z" fill="#969696" stroke="#b8b8b8" stroke-width="0.5"/></svg></div>
<div class="a pb" style="left:677px;top:286px"><svg width="20" height="19"><path d="M1 2.8V1H2.8 M17.2 1H19V2.8 M19 16.2V18H17.2 M2.8 18H1V16.2" fill="none" stroke="#34507e" stroke-width="1.5"/><path d="M5 4.5 L15 14.5 M15 4.5 L5 14.5" stroke="#a4a4a4" stroke-width="2"/></svg></div>

<div class="a" id="scroll"><div class="a trk"></div></div>
<div class="a" id="thumb"><div class="a" style="left:2px;top:3px;width:7px;height:1px;background:#8a8a8a"></div></div>
<svg class="a" style="left:0;top:460px" width="713" height="30"><path d="M16.9 17.3 L20.7 14.6 V19.9 Z" fill="#555"/><path d="M694 14.7 L696 17.3 L694 20 Z" fill="#555"/><path d="M699.5 13 L697 17 M698 18.5 L696.5 21" stroke="#999" stroke-width="0.8"/></svg>
</body></html>
